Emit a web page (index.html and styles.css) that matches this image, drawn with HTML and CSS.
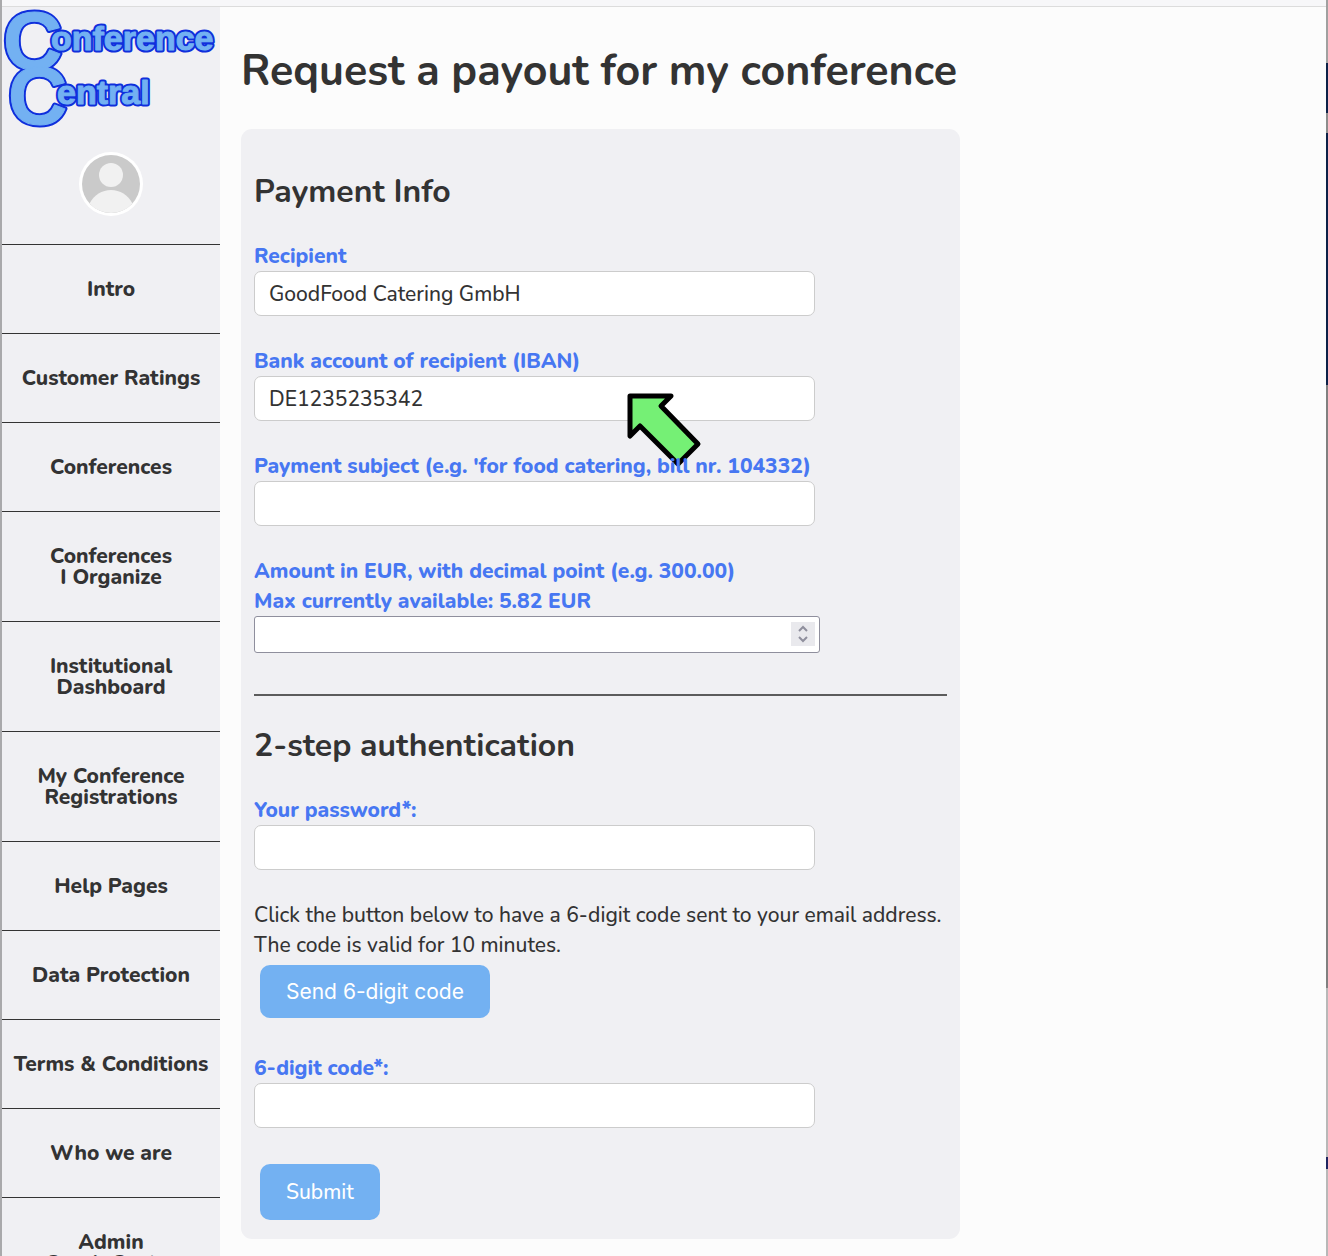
FILE: index.html
```html
<!DOCTYPE html>
<html lang="en">
<head>
  <meta charset="UTF-8" />
  <meta name="viewport" content="width=device-width, initial-scale=1.0" />
  <title>Conference Central - Request a payout</title>
  <link rel="stylesheet" href="styles.css">
</head>
<body>
  <div class="edge edge-left"></div>
  <div class="window">
    <div class="topbar"></div>
    <div class="page">
      <aside class="sidebar">
        <a class="logo" href="#" aria-label="Conference Central">
          <svg width="218" height="126" viewBox="2 7 218 126">
            <use class="outline" href="#logo-big" />
            <g id="logo-big">
              <text class="big" x="3" y="69">C</text>
              <text class="big" x="8" y="124">C</text>
            </g>
            <use class="outline" href="#logo-small" />
            <g id="logo-small">
              <text class="small" x="51" y="50">onference</text>
              <text class="small" x="57" y="104">entral</text>
            </g>
          </svg>
        </a>
        <a class="avatar" href="#" aria-label="My profile">
          <svg width="64" height="64" viewBox="0 0 64 64">
            <circle cx="32" cy="32" r="32" fill="#fff" />
            <circle cx="32" cy="32" r="29" fill="#cacaca" />
            <circle cx="32" cy="23" r="12" fill="#f1f1f1" />
            <path d="M10.500 51.500 C15 43 23 38 32 38 C41 38 49 43 53.500 51.500 A29 29 0 0 1 10.500 51.500 Z" fill="#f1f1f1" />
          </svg>
        </a>
        <nav class="menu">
          <a href="#">Intro</a>
          <a href="#">Customer Ratings</a>
          <a href="#">Conferences</a>
          <a href="#">Conferences<br>I Organize</a>
          <a href="#">Institutional<br>Dashboard</a>
          <a href="#">My Conference<br>Registrations</a>
          <a href="#">Help Pages</a>
          <a href="#">Data Protection</a>
          <a href="#">Terms &amp; Conditions</a>
          <a href="#">Who we are</a>
          <a href="#">Admin<br>Coach Center</a>
        </nav>
      </aside>

      <main class="content">
        <h1>Request a payout for my conference</h1>
        <form class="panel">
          <h2>Payment Info</h2>
          <div class="field">
            <label for="recipient">Recipient</label>
            <input type="text" id="recipient" value="GoodFood Catering GmbH" />
          </div>
          <div class="field">
            <label for="iban">Bank account of recipient (IBAN)</label>
            <input type="text" id="iban" value="DE1235235342" />
            <svg class="pointer" width="76" height="76" viewBox="0 0 76 76">
              <path d="M4 4 H45 L35 14 L72 52 L52 72 L14 34 L4 44 Z" />
            </svg>
          </div>
          <div class="field">
            <label for="subject">Payment subject (e.g. 'for food catering, bill nr. 104332)</label>
            <input type="text" id="subject" />
          </div>
          <div class="field">
            <label for="amount">Amount in EUR, with decimal point (e.g. 300.00)<br>Max currently available: 5.82 EUR</label>
            <div class="number">
              <input type="number" id="amount" step="0.01" />
              <svg class="spinner" width="24" height="24" viewBox="0 0 24 24">
                <path d="M8 9 L12 5 L16 9 M8 15 L12 19 L16 15" />
              </svg>
            </div>
          </div>

          <hr>

          <h2>2-step authentication</h2>
          <div class="field">
            <label for="password">Your password*:</label>
            <input type="password" id="password" />
          </div>
          <p>Click the button below to have a 6-digit code sent to your email address.<br>The code is valid for 10 minutes.</p>
          <button type="button" class="send">Send 6-digit code</button>
          <div class="field">
            <label for="code">6-digit code*:</label>
            <input type="text" id="code" />
          </div>
          <button type="submit" class="submit">Submit</button>
        </form>
      </main>
    </div>
  </div>
  <div class="edge edge-right"></div>
</body>
</html>
```
FILE: styles.css
```css
* {
  box-sizing: border-box;
}
body {
  margin: 0;
  height: 100vh;
  overflow: hidden;
  display: flex;
  background-color: #fcfcfc;
  color: #333;
  font-family: Nunito, Lato, sans-serif;
  font-size: 21px;
  font-weight: 500;
  line-height: 30px;
}
.window {
  flex: 1;
}
.topbar {
  height: 7px;
  border-bottom: 1px solid #dcdcdc;
  background-color: #f7f7f9;
}
.page {
  display: flex;
}
.edge {
  width: 2px;
}
.edge-left {
  background-color: #a9a9ab;
}
.edge-right {
  background: linear-gradient(#a0a0a0 63px, #0c2148 63px, #0c2148 113px, #8c8c8c 113px, #8c8c8c 133px, #0c2148 133px, #0c2148 385px, #808080 385px, #808080 988px, #b8b8b8 988px, #b8b8b8 1157px, #1f2560 1157px, #1f2560 1169px, #b8b8b8 1169px);
}

/* sidebar */
.sidebar {
  width: 218px;
  flex-shrink: 0;
  background-color: #f0f0f3;
}
.logo {
  display: block;
  height: 145px;
}
.logo svg {
  display: block;
  overflow: visible;
  font-family: "Liberation Sans", Arial, sans-serif;
  font-weight: bold;
  fill: #73b1f2;
  stroke: #73b1f2;
  stroke-width: 1px;
  stroke-linejoin: round;
}
.logo .outline {
  fill: #0f2fdc;
  stroke: #0f2fdc;
  stroke-width: 5px;
}
.logo .big {
  font-size: 82px;
}
.logo .small {
  font-size: 34px;
}
.avatar {
  display: flex;
  justify-content: center;
  height: 92px;
}
.menu a {
  display: block;
  padding: 34px 0 33px;
  border-top: 1px solid #333;
  color: #333;
  font-weight: 800;
  line-height: 21px;
  text-align: center;
  text-decoration: none;
}

/* main column */
.content {
  flex: 1;
  padding: 34px 21px 0;
}
h1 {
  margin: 0 0 28px;
  font-size: 43px;
  line-height: 60px;
}
h2 {
  margin: 30px 0 29px;
  font-size: 32px;
  line-height: 40px;
}
.panel {
  max-width: 719px;
  padding: 13px 13px 19px;
  border-radius: 11px;
  background-color: #f0f0f3;
  display: flow-root;
}
.field {
  position: relative;
  margin-bottom: 30px;
}
label {
  display: block;
  color: #4777f2;
  font-weight: 800;
}
input {
  display: block;
  width: 561px;
  max-width: 100%;
  height: 45px;
  padding: 0 14px;
  border: 1px solid #ccc;
  border-radius: 7px;
  background-color: #fff;
  color: #333;
  font: inherit;
}
.number {
  position: relative;
  width: 566px;
  max-width: 100%;
}
.number input {
  width: 100%;
  height: 37px;
  border-color: #8f8f9d;
  border-radius: 3px;
  appearance: textfield;
}
.number input::-webkit-inner-spin-button {
  appearance: none;
}
.spinner {
  position: absolute;
  top: 6px;
  right: 5px;
  background-color: #e9e9ed;
  fill: none;
  stroke: #8f8f9d;
  stroke-width: 2;
}
.pointer {
  position: absolute;
  top: 46px;
  left: 372px;
  fill: #75f075;
  stroke: #000;
  stroke-width: 5;
  stroke-linejoin: round;
}
hr {
  height: 2px;
  margin: 41px 0 29px;
  border: none;
  background-color: #5c5c5c;
}
p {
  margin: 0 0 5px;
}
button {
  display: block;
  margin-left: 6px;
  padding: 0 26px;
  border: none;
  border-radius: 10px;
  background-color: #73b1f2;
  color: #fff;
  font: inherit;
  cursor: pointer;
}
.send {
  height: 53px;
  margin-bottom: 35px;
  font-family: Inter, sans-serif;
  font-weight: normal;
}
.submit {
  height: 56px;
  margin-top: 36px;
}
```
